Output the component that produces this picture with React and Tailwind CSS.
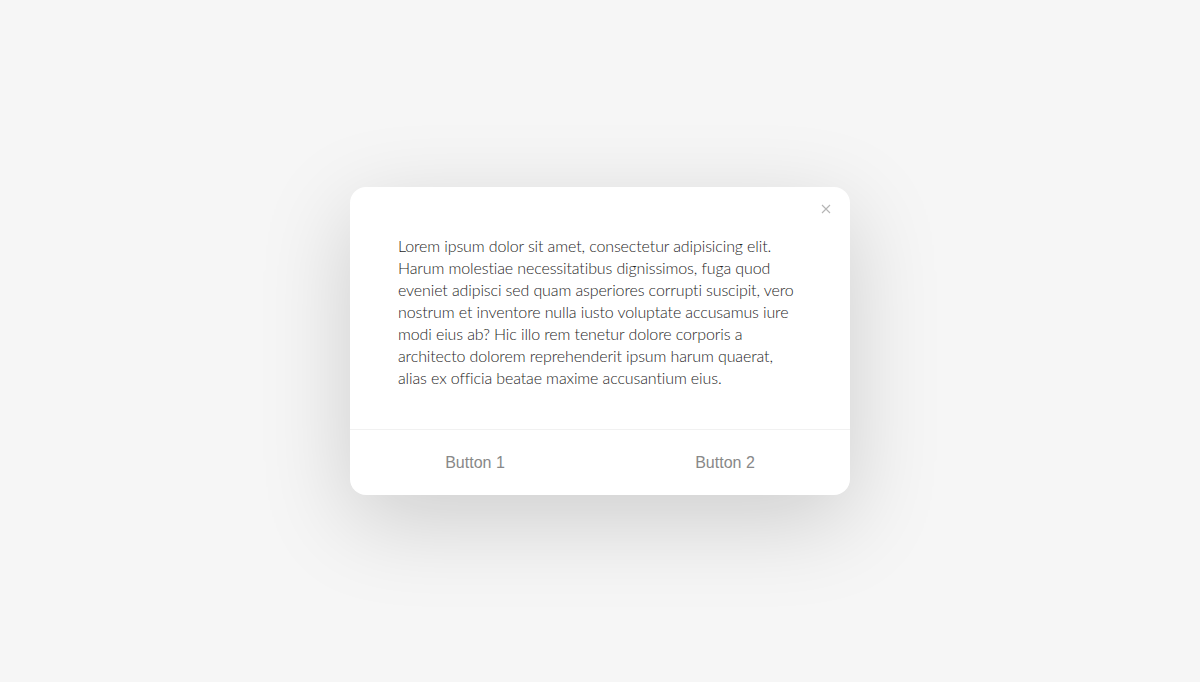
import React from 'react';

const text =
  'Lorem ipsum dolor sit amet, consectetur adipisicing elit. Harum molestiae necessitatibus dignissimos, fuga quod eveniet adipisci sed quam asperiores corrupti suscipit, vero nostrum et inventore nulla iusto voluptate accusamus iure modi eius ab? Hic illo rem tenetur dolore corporis a architecto dolorem reprehenderit ipsum harum quaerat, alias ex officia beatae maxime accusantium eius.';

const App = () => {
  return (
    <div className="h-[682px] bg-[#f6f6f6] flex items-center justify-center">
      {/* Modal card */}
      <div className="relative w-[500px] bg-white rounded-2xl shadow-[0_25px_90px_rgba(0,0,0,0.17)] overflow-hidden">
        <button className="absolute top-[16px] right-[19px] w-[11px] h-[11px] flex items-center justify-center">
          <svg width="10" height="10" viewBox="0 0 10 10" stroke="#b5b5b5" strokeWidth="1.1">
            <path d="M1 1 L9 9 M9 1 L1 9" />
          </svg>
        </button>

        {/* Body text */}
        <div className="px-12 pt-12 pb-10">
          <p className="font-['Lato',sans-serif] font-light text-[16px] tracking-[-0.12px] leading-[22px] text-[#1f1f1f]">
            {text}
          </p>
        </div>

        {/* Footer buttons */}
        <div className="border-t border-[#f1f1f1] grid grid-cols-2 h-[66px]">
          <button className="font-['Liberation_Sans',Arial,sans-serif] text-[16px] text-[#888]">
            Button 1
          </button>
          <button className="font-['Liberation_Sans',Arial,sans-serif] text-[16px] text-[#888]">
            Button 2
          </button>
        </div>
      </div>
    </div>
  );
};

export default App;
